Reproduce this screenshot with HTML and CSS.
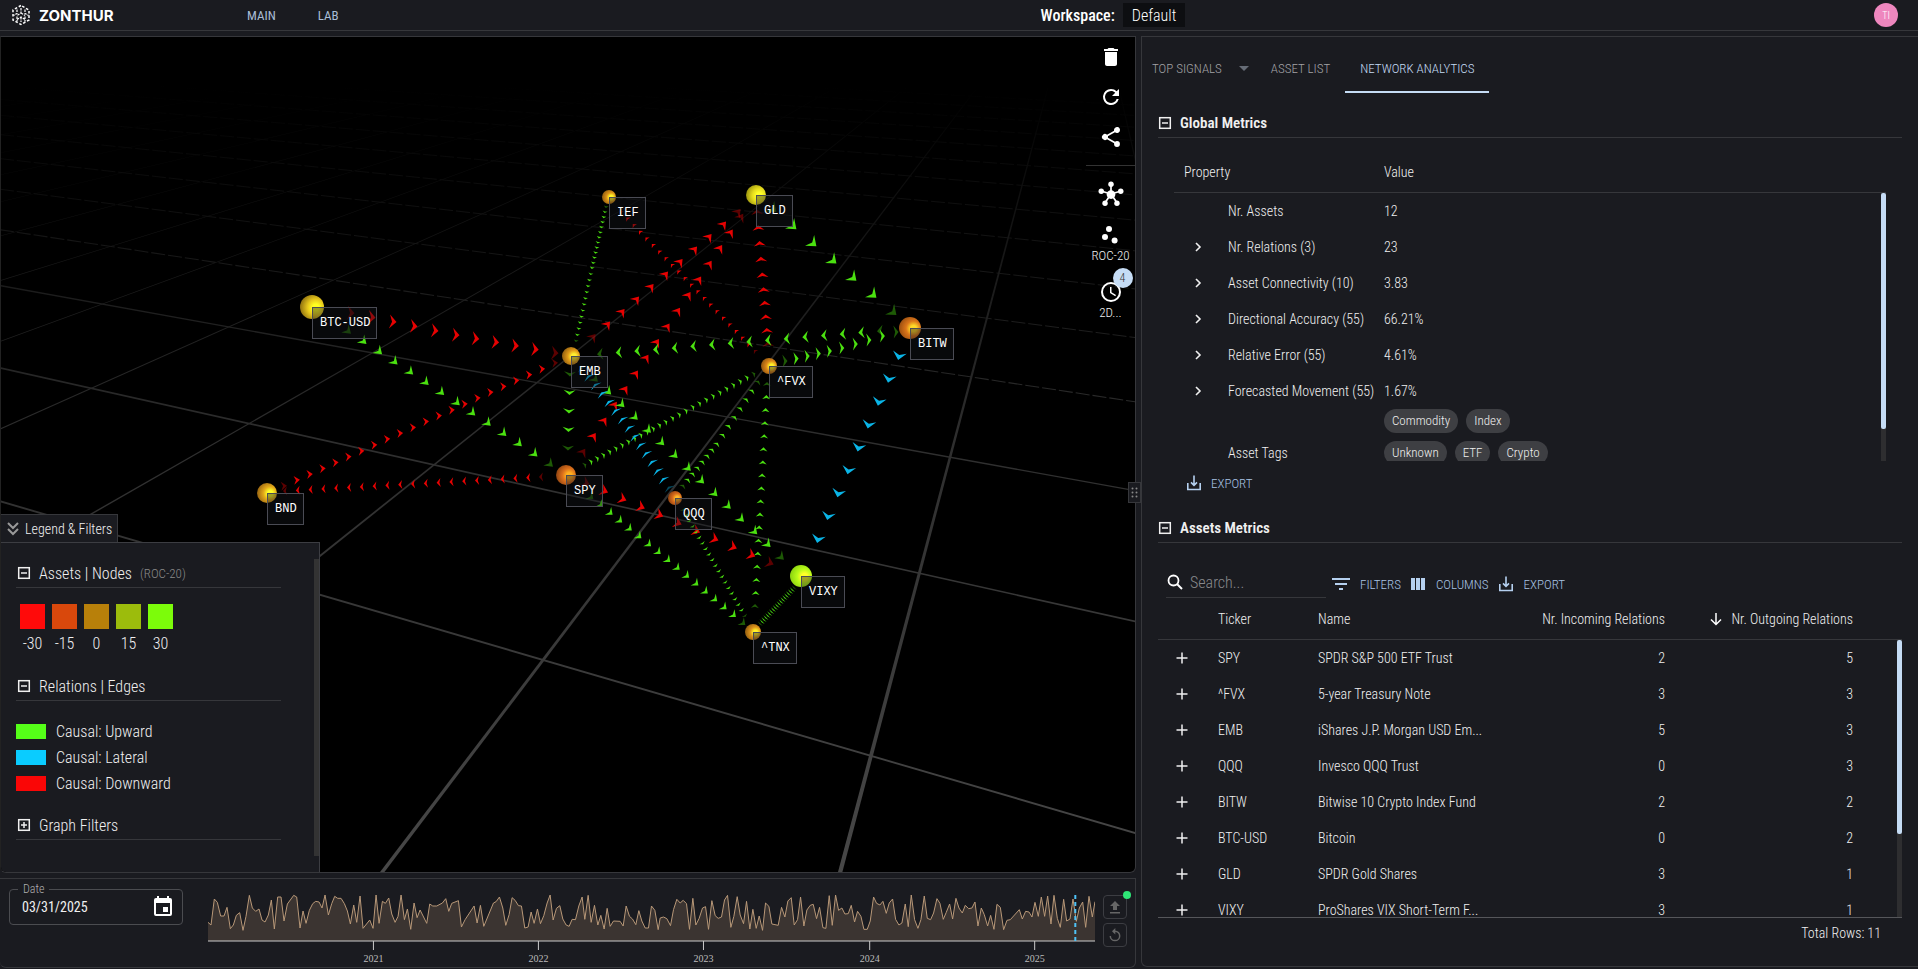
FILE: index.html
```html
<!DOCTYPE html>
<html lang="en">
<head>
<meta charset="utf-8">
<title>Zonthur</title>
<link rel="stylesheet" href="styles.css">
</head>
<body>
<svg class="defs" width="0" height="0" aria-hidden="true">
  <symbol id="i-minus" viewBox="0 0 14 14"><rect x="1.7" y="1.7" width="10.6" height="10.6" fill="none" stroke="currentColor" stroke-width="1.5"/><path d="M4 7h6" stroke="currentColor" stroke-width="1.5"/></symbol>
  <symbol id="i-plus" viewBox="0 0 14 14"><rect x="1.7" y="1.7" width="10.6" height="10.6" fill="none" stroke="currentColor" stroke-width="1.5"/><path d="M4 7h6M7 4v6" stroke="currentColor" stroke-width="1.5"/></symbol>
  <symbol id="i-export" viewBox="0 0 16 16"><path d="M1.8 8v6.5h12.4V8" fill="none" stroke="currentColor" stroke-width="1.6"/><path d="M8 .5v10M5 7.4 8 10.4l3-3" fill="none" stroke="currentColor" stroke-width="1.6"/></symbol>
  <symbol id="i-chev" viewBox="0 0 12 12"><path d="M4 2l4 4-4 4" fill="none" stroke="currentColor" stroke-width="1.6"/></symbol>
  <symbol id="i-add" viewBox="0 0 12 12"><path d="M6 .5v11M.5 6h11" stroke="currentColor" stroke-width="1.5"/></symbol>
</svg>

<header class="topbar">
  <div class="brand">
    <svg width="22" height="22" viewBox="0 0 22 22" fill="none" stroke="#fff">
      <path d="M11 1.5 3 6v10l8 4.5 8-4.5V6z" stroke-width="1.5" stroke-dasharray="2.6 1.8"/>
      <path d="M11 4v5l-4 2.5M11 9l4 2.5M7 5.5v4L3.5 11.5M15 5.5v4l3.5 2M7 12.5v5M15 12.5v5M11 13v5M7 15.5l4-2.5 4 2.5" stroke-width="1.2" stroke-dasharray="2.4 1"/>
    </svg>
    <strong>ZONTHUR</strong>
  </div>
  <nav class="mainnav"><a href="#main">MAIN</a><a href="#lab">LAB</a></nav>
  <div class="workspace"><b>Workspace:</b><button type="button">Default</button></div>
  <button class="avatar" type="button">TI</button>
</header>

<main class="layout">
  <div class="left">
    <section class="graph">
      <svg class="scene" viewBox="1 37 1134 835" preserveAspectRatio="xMidYMid slice" id="scene"></svg>

      <div class="tools">
        <button type="button" aria-label="Delete"><svg width="24" height="24" viewBox="0 0 24 24"><path d="M6 19c0 1.1.9 2 2 2h8c1.1 0 2-.9 2-2V7H6v12zM19 4h-3.500l-1-1h-5l-1 1H5v2h14V4z"/></svg></button>
        <button type="button" aria-label="Refresh"><svg width="24" height="24" viewBox="0 0 24 24"><path d="M17.650 6.350A7.958 7.958 0 0 0 12 4a8 8 0 1 0 7.730 10h-2.080A6 6 0 1 1 12 6c1.660 0 3.140.69 4.220 1.780L13 11h7V4l-2.350 2.350z"/></svg></button>
        <button type="button" aria-label="Share"><svg width="24" height="24" viewBox="0 0 24 24"><path d="M18 16.080c-.76 0-1.440.3-1.960.77L8.910 12.700c.05-.23.09-.46.09-.7s-.04-.47-.09-.7l7.050-4.110A3 3 0 1 0 15 5c0 .24.040.47.090.7L8.040 9.810a3 3 0 1 0 0 4.380l7.120 4.160c-.05.21-.08.43-.08.650a2.920 2.920 0 1 0 2.920-2.920z"/></svg></button>
        <hr>
        <button type="button" aria-label="Hub" class="hub"><svg width="26" height="28" viewBox="0 0 24 24"><path d="M12 12V4M12 12 3.500 9.500M12 12l8.500-2.500M12 12l-5.500 8M12 12l5.500 8" stroke="#fff" stroke-width="1.600"/><circle cx="12" cy="12.500" r="4"/><circle cx="12" cy="3" r="2.500"/><circle cx="3" cy="9.500" r="2.500"/><circle cx="21" cy="9.500" r="2.500"/><circle cx="6.500" cy="20.500" r="2.500"/><circle cx="17.500" cy="20.500" r="2.500"/></svg></button>
        <button type="button" class="labelled"><svg width="24" height="24" viewBox="0 0 24 24"><circle cx="7" cy="14" r="3"/><circle cx="11" cy="6" r="3"/><circle cx="16.600" cy="17.600" r="3"/></svg><span>ROC-20</span></button>
        <button type="button" class="labelled clock"><i class="badge">4</i><svg width="24" height="24" viewBox="0 0 24 24"><path d="M12 2a10 10 0 1 0 0 20 10 10 0 0 0 0-20zm0 18a8 8 0 1 1 0-16 8 8 0 0 1 0 16zm.5-13H11v6l5.250 3.150.75-1.230-4.500-2.670z"/></svg><span>2D...</span></button>
      </div>

      <div class="legend-wrap">
        <button class="legend-tab" type="button"><svg width="14" height="16" viewBox="0 0 14 16"><path d="M2 2l5 5 5-5M2 8l5 5 5-5" fill="none" stroke="#999" stroke-width="2"/></svg>Legend &amp; Filters</button>
        <div class="legend">
          <h3><svg width="14" height="14"><use href="#i-minus"/></svg>Assets | Nodes <small>(ROC-20)</small></h3>
          <ul class="scale">
            <li><i class="s1"></i>-30</li><li><i class="s2"></i>-15</li><li><i class="s3"></i>0</li><li><i class="s4"></i>15</li><li><i class="s5"></i>30</li>
          </ul>
          <h3><svg width="14" height="14"><use href="#i-minus"/></svg>Relations | Edges</h3>
          <ul class="edges">
            <li><i class="up"></i>Causal: Upward</li><li><i class="lat"></i>Causal: Lateral</li><li><i class="down"></i>Causal: Downward</li>
          </ul>
          <h3><svg width="14" height="14"><use href="#i-plus"/></svg>Graph Filters</h3>
          <span class="track"></span>
        </div>
      </div>
    </section>

    <section class="timeline">
      <div class="date">
        <label for="date">Date</label>
        <input id="date" type="text" value="03/31/2025">
        <button type="button" aria-label="Open calendar"><svg width="24" height="24" viewBox="0 0 24 24"><path d="M17 12h-5v5h5v-5zM16 1v2H8V1H6v2H5a2 2 0 0 0-2 2v14a2 2 0 0 0 2 2h14a2 2 0 0 0 2-2V5a2 2 0 0 0-2-2h-1V1h-2zm3 18H5V8h14v11z" fill="#fff"/></svg></button>
      </div>
      <div class="chart">
        <svg class="plot" viewBox="24 100 2660 144" preserveAspectRatio="none"><path id="area" fill="#3b3431"/><path id="line" fill="none" stroke="#b89878" stroke-width="1" vector-effect="non-scaling-stroke"/></svg>
        <svg class="axis">
          <line x1="0" x2="100%" y1="48" y2="48" stroke="#ccc"/>
          <g stroke="#ccc"><line x1="18.65%" x2="18.65%" y1="48" y2="57"/><line x1="37.25%" x2="37.25%" y1="48" y2="57"/><line x1="55.86%" x2="55.86%" y1="48" y2="57"/><line x1="74.6%" x2="74.6%" y1="48" y2="57"/><line x1="93.2%" x2="93.2%" y1="48" y2="57"/></g>
          <line x1="97.78%" x2="97.78%" y1="2" y2="48" stroke="#4fc3f7" stroke-width="2" stroke-dasharray="4 3"/>
          <g class="years"><text x="18.65%" y="69">2021</text><text x="37.25%" y="69">2022</text><text x="55.86%" y="69">2023</text><text x="74.6%" y="69">2024</text><text x="93.2%" y="69">2025</text></g>
        </svg>
      </div>
      <div class="mini">
        <button type="button" aria-label="Upload"><i class="dot"></i><svg width="14" height="14" viewBox="0 0 14 14"><path d="M7 1 2 6h3v4h4V6h3zM2 12h10v1.500H2z" fill="#666"/></svg></button>
        <button type="button" aria-label="Reset"><svg width="14" height="14" viewBox="0 0 14 14"><path d="M7 3.200a4.700 4.700 0 1 1-4.700 4.700" fill="none" stroke="#666" stroke-width="1.500"/><path d="M7.300 0v6.400L4 3.200z" fill="#666"/></svg></button>
      </div>
    </section>
    <span class="grip"><svg width="7" height="11" viewBox="0 0 7 11" fill="#888"><circle cx="1.500" cy="1.500" r="1"/><circle cx="5.500" cy="1.500" r="1"/><circle cx="1.500" cy="5.500" r="1"/><circle cx="5.500" cy="5.500" r="1"/><circle cx="1.500" cy="9.500" r="1"/><circle cx="5.500" cy="9.500" r="1"/></svg></span>
  </div>

  <section class="right">
    <div class="tabs" role="tablist">
      <button type="button" role="tab" class="first">TOP SIGNALS<i class="caret"></i></button>
      <button type="button" role="tab">ASSET LIST</button>
      <button type="button" role="tab" class="active" aria-selected="true">NETWORK ANALYTICS</button>
    </div>

    <h2><svg width="14" height="14"><use href="#i-minus"/></svg>Global Metrics</h2>
    <div class="box global">
      <table>
        <colgroup><col class="g1"><col class="g2"><col></colgroup>
        <thead><tr><th colspan="2">Property</th><th>Value</th></tr></thead>
        <tbody>
          <tr><td></td><td>Nr. Assets</td><td>12</td></tr>
          <tr><td><svg width="12" height="12"><use href="#i-chev"/></svg></td><td>Nr. Relations (3)</td><td>23</td></tr>
          <tr><td><svg width="12" height="12"><use href="#i-chev"/></svg></td><td>Asset Connectivity (10)</td><td>3.83</td></tr>
          <tr><td><svg width="12" height="12"><use href="#i-chev"/></svg></td><td>Directional Accuracy (55)</td><td>66.21%</td></tr>
          <tr><td><svg width="12" height="12"><use href="#i-chev"/></svg></td><td>Relative Error (55)</td><td>4.61%</td></tr>
          <tr><td><svg width="12" height="12"><use href="#i-chev"/></svg></td><td>Forecasted Movement (55)</td><td>1.67%</td></tr>
          <tr class="tags"><td></td><td>Asset Tags</td><td><div class="chips"><span>Commodity</span><span>Index</span><span>Unknown</span><span>ETF</span><span>Crypto</span></div></td></tr>
        </tbody>
      </table>
      <span class="bar"><i></i></span>
    </div>
    <button type="button" class="link solo"><svg width="16" height="16"><use href="#i-export"/></svg>EXPORT</button>

    <h2><svg width="14" height="14"><use href="#i-minus"/></svg>Assets Metrics</h2>
    <div class="toolbar">
      <label class="search"><svg width="18" height="18" viewBox="0 0 18 18"><circle cx="7.500" cy="7.500" r="5" fill="none" stroke="#fff" stroke-width="1.800"/><path d="M11 11l5 5" stroke="#fff" stroke-width="2"/></svg><input type="text" placeholder="Search..." aria-label="Search"></label>
      <button type="button" class="link"><svg width="18" height="14" viewBox="0 0 18 14"><path d="M0 1h18v2H0zM3 6h12v2H3zM7 11h4v2H7z" fill="currentColor"/></svg>FILTERS</button>
      <button type="button" class="link cols"><svg width="16" height="14" viewBox="0 0 16 14"><path d="M1 1h4v12H1zM6 1h4v12H6zM11 1h4v12h-4z" fill="currentColor"/></svg>COLUMNS</button>
      <button type="button" class="link"><svg width="16" height="16"><use href="#i-export"/></svg>EXPORT</button>
    </div>
    <div class="box assets">
      <table>
        <colgroup><col class="a1"><col class="a2"><col class="a3"><col><col class="a5"></colgroup>
        <thead><tr><th></th><th>Ticker</th><th>Name</th><th class="n">Nr. Incoming Relations</th><th class="n last"><svg width="14" height="14" viewBox="0 0 14 14"><path d="M7 1v11M2 7.500l5 5 5-5" fill="none" stroke="#fff" stroke-width="1.500"/></svg>Nr. Outgoing Relations</th></tr></thead>
        <tbody>
          <tr><td><svg width="12" height="12"><use href="#i-add"/></svg></td><td>SPY</td><td>SPDR S&amp;P 500 ETF Trust</td><td class="n">2</td><td class="n last">5</td></tr>
          <tr><td><svg width="12" height="12"><use href="#i-add"/></svg></td><td>^FVX</td><td>5-year Treasury Note</td><td class="n">3</td><td class="n last">3</td></tr>
          <tr><td><svg width="12" height="12"><use href="#i-add"/></svg></td><td>EMB</td><td>iShares J.P. Morgan USD Em...</td><td class="n">5</td><td class="n last">3</td></tr>
          <tr><td><svg width="12" height="12"><use href="#i-add"/></svg></td><td>QQQ</td><td>Invesco QQQ Trust</td><td class="n">0</td><td class="n last">3</td></tr>
          <tr><td><svg width="12" height="12"><use href="#i-add"/></svg></td><td>BITW</td><td>Bitwise 10 Crypto Index Fund</td><td class="n">2</td><td class="n last">2</td></tr>
          <tr><td><svg width="12" height="12"><use href="#i-add"/></svg></td><td>BTC-USD</td><td>Bitcoin</td><td class="n">0</td><td class="n last">2</td></tr>
          <tr><td><svg width="12" height="12"><use href="#i-add"/></svg></td><td>GLD</td><td>SPDR Gold Shares</td><td class="n">3</td><td class="n last">1</td></tr>
          <tr><td><svg width="12" height="12"><use href="#i-add"/></svg></td><td>VIXY</td><td>ProShares VIX Short-Term F...</td><td class="n">3</td><td class="n last">1</td></tr>
        </tbody>
      </table>
      <span class="bar"><i></i></span>
    </div>
    <p class="total">Total Rows: 11</p>
  </section>
</main>
<script src="scene.js"></script>
</body>
</html>
```
FILE: styles.css
```css
* { box-sizing: border-box; }
body {
  margin: 0;
  height: 100vh;
  display: flex;
  flex-direction: column;
  overflow: hidden;
  background: #1a1b20;
  color: #f0f0f0;
  font-family: "Roboto Condensed", "Liberation Sans", sans-serif;
  font-size: 14px;
  font-weight: 300;
}
button, input { font: inherit; color: inherit; background: none; border: 0; padding: 0; margin: 0; }
svg { display: block; flex: none; }
ul, h2, h3, p { margin: 0; padding: 0; }
ul { list-style: none; }
.defs { position: absolute; }

.topbar {
  flex: none;
  height: 31px;
  display: grid;
  grid-template-columns: 247px minmax(0, 795fr) auto minmax(0, 734fr);
  align-items: center;
  border-bottom: 1px solid #36373b;
}
.brand { display: flex; align-items: center; gap: 7px; padding-left: 10px; }
.brand strong { font: 700 15px "Inter", sans-serif; color: #fff; }
.mainnav { display: flex; gap: 42px; }
.mainnav a { color: #a9bdd6; text-decoration: none; font-size: 13px; font-weight: 400; }
.workspace { display: flex; align-items: center; gap: 8px; font-size: 16px; color: #fff; }
.workspace b { font-weight: 500; }
.workspace button { height: 24px; padding: 0 9px; background: #0d0e11; }
.avatar {
  justify-self: end;
  margin-right: 20px;
  width: 24px;
  height: 24px;
  border-radius: 50%;
  background: #ee87be;
  color: #fff;
  font-size: 10px;
}

.layout {
  flex: 1;
  min-height: 0;
  display: grid;
  grid-template-columns: minmax(0, 1136fr) minmax(0, 777fr);
  gap: 5px;
  padding-top: 5px;
}
.left { position: relative; display: flex; flex-direction: column; gap: 5px; min-height: 0; padding-bottom: 1px; }
.graph {
  position: relative;
  flex: 1;
  min-height: 0;
  background: #000;
  border: 1px solid #36373b;
  border-left-color: #222;
  border-radius: 0 0 6px 6px;
  overflow: hidden;
}
.scene { width: 100%; height: 100%; }
.scene text { font: 12px "Liberation Mono", monospace; fill: #fff; }

.tools {
  position: absolute;
  top: 0;
  right: 0;
  width: 49px;
  padding-top: 8px;
  display: flex;
  flex-direction: column;
  align-items: center;
  gap: 16px;
}
.tools svg { fill: #fff; }
.tools hr { width: 100%; margin: 0; border: 0; border-top: 1px solid #333; }
.tools hr + .hub { margin-top: -2px; }
.labelled { position: relative; display: flex; flex-direction: column; align-items: center; margin-top: -1px; font-size: 13px; line-height: 18px; }
.badge {
  position: absolute;
  left: 14px;
  top: -12px;
  width: 20px;
  height: 20px;
  line-height: 20px;
  border-radius: 50%;
  background: #c5dcf5;
  color: #333;
  font-style: normal;
  font-size: 12px;
  text-align: center;
}

.legend-wrap { position: absolute; left: 0; bottom: 0; width: 319px; }
.legend-tab {
  height: 28px;
  padding: 0 5px;
  display: flex;
  align-items: center;
  gap: 5px;
  background: #1a1b20;
  border: 1px solid #36373b;
  border-bottom: 0;
  border-left: 0;
}
.legend { position: relative; height: 330px; padding: 16px 38px 0 15px; background: #1a1b20; border: 1px solid #3c3d42; border-left: 0; border-bottom: 0; font-size: 16px; }
.legend h3 {
  display: flex;
  align-items: center;
  gap: 8px;
  height: 29px;
  font-size: 16px;
  font-weight: 300;
  border-bottom: 1px solid #36373b;
  padding-left: 1px;
}
.legend h3 small { font-size: 13px; color: #8a8a8a; }
.scale { display: flex; gap: 7px; padding: 16px 0 26px 4px; }
.scale li { display: flex; flex-direction: column; align-items: center; gap: 5px; width: 25px; height: 42px; line-height: 20px; }
.scale i { flex: none; width: 25px; height: 25px; }
.s1 { background: #ff0a0a; } .s2 { background: #d9480c; } .s3 { background: #b8800a; } .s4 { background: #9cbc0c; } .s5 { background: #7cfc0a; }
.edges { padding: 17px 0 15px; }
.edges li { display: flex; align-items: center; gap: 10px; height: 26px; }
.edges i { width: 30px; height: 15px; }
.up { background: #55ff18; } .lat { background: #0accff; } .down { background: #fa0606; }
.track { position: absolute; right: 0; top: 16px; bottom: 16px; width: 5px; background: #333; }

.timeline { flex: none; display: flex; height: 90px; border: 1px solid #36373b; border-left: 0; border-radius: 0 0 6px 6px; }
.date { position: relative; width: 174px; height: 36px; margin: 10px 25px 0 9px; display: flex; align-items: center; padding: 0 14px 0 12px; border: 1px solid #4b4c50; border-radius: 4px; }
.date label { position: absolute; left: 8px; top: -9px; padding: 0 5px; background: #1a1b20; color: #b0b0b0; font-size: 12px; line-height: 16px; }
.date input { flex: 1; min-width: 0; font-weight: 400; }
.date button { margin-right: -7px; }
.chart { position: relative; flex: 1; min-width: 0; margin-top: 14px; }
.plot { width: 100%; height: 48px; }
.axis { position: absolute; left: 0; top: 0; width: 100%; height: 74px; overflow: visible; }
.years text { font: 10px "Liberation Serif", serif; fill: #bbb; text-anchor: middle; }
.mini { display: flex; flex-direction: column; gap: 4px; margin: 16px 8px 0; }
.mini button { position: relative; width: 24px; height: 24px; border: 1px solid #3c3d42; border-radius: 4px; display: grid; place-items: center; }
.dot { position: absolute; right: -5px; top: -5px; width: 8px; height: 8px; border-radius: 50%; background: #2ee676; }
.grip { position: absolute; right: -5px; top: 446px; width: 13px; height: 21px; display: grid; place-items: center; background: #1a1b20; border: 1px solid #36373b; }

.right {
  display: flex;
  flex-direction: column;
  min-height: 0;
  padding: 8px 16px 12px 16px;
  border: 1px solid #36373b;
  border-right: 0;
  border-radius: 0 0 0 6px;
  margin-bottom: 2px;
}
.tabs { flex: none; display: flex; height: 48px; margin-left: -6px; }
.tabs button { display: flex; align-items: center; padding: 0 15px; color: #a3a3a6; font-size: 13px; border-bottom: 2px solid transparent; }
.tabs .first { padding-left: 0; padding-right: 7px; gap: 17px; }
.tabs .active { color: #c5dcf5; border-color: #c5dcf5; }
.caret { border: 5px solid transparent; border-top-color: #666c76; border-bottom: 0; }
.right h2 {
  flex: none;
  height: 29px;
  display: flex;
  align-items: center;
  gap: 8px;
  margin-top: 16px;
  border-bottom: 1px solid #36373b;
  font-size: 15px;
  font-weight: 600;
}
.box { position: relative; overflow: hidden; }
.box table { width: 100%; table-layout: fixed; border-collapse: separate; border-spacing: 0; }
.box th { height: 41px; padding: 0; text-align: left; font-weight: 300; border-bottom: 1px solid #36373b; }
.box td { height: 36px; padding: 0; white-space: nowrap; }
.global { flex: none; height: 309px; margin: 14px 16px 0; }
.global th:first-child { padding-left: 10px; }
.global td svg { margin-left: 18px; }
.g1 { width: 54px; } .g2 { width: 156px; }
.global .tags td { height: 88px; }
.global .tags td:last-child { vertical-align: top; }
.chips { display: flex; flex-wrap: wrap; gap: 8px; width: 180px; font-size: 13px; }
.chips span { height: 24px; line-height: 24px; padding: 0 8px; border-radius: 12px; background: #3e3f43; }
.bar { position: absolute; right: 0; top: 41px; bottom: 0; width: 5px; background: #2e2e30; }
.bar i { display: block; height: 88%; border-radius: 2px; background: #c5dcf5; }
.assets .bar i { height: 70%; }
.link { display: flex; align-items: center; gap: 9px; height: 30px; color: #a9c4e4; font-size: 13px; }
.link svg { color: #b5d0ef; }
.solo { align-self: flex-start; flex: none; margin: 7px 0 0 28px; }
.toolbar { flex: none; display: flex; gap: 9px; height: 32px; margin-top: 24px; }
.toolbar .link { height: 34px; gap: 10px; }
.search { display: flex; align-items: center; gap: 6px; width: 160px; margin: 0 -3px 0 8px; height: 31px; border-bottom: 1px solid #36373b; }
.search input { flex: 1; min-width: 0; font-size: 16px; outline: 0; }
.search input::placeholder { color: #88898c; opacity: 1; }
.assets { flex: 1; min-height: 0; border-bottom: 1px solid #55565a; }
.a1 { width: 60px; } .a2 { width: 100px; } .a3 { width: 159px; } .a5 { width: 237px; }
.assets td svg { margin-left: 18px; }
.box .n { text-align: right; }
.box .last { padding-right: 49px; }
.last svg { display: inline-block; vertical-align: -2px; margin-right: 8px; }
.total { flex: none; height: 36px; padding: 5px 21px 0; text-align: right; line-height: 20px; }
```
FILE: scene.js
```js
const NS = 'http://www.w3.org/2000/svg';
const scene = document.getElementById('scene');
function add(tag, attrs, parent = scene) {
  const el = document.createElementNS(NS, tag);
  for (const k in attrs) el.setAttribute(k, attrs[k]);
  parent.appendChild(el);
  return el;
}

/* Floor grid: two families of lines, each meeting at its own vanishing point. */
const defs = add('defs', {});
const fog = add('linearGradient', { id: 'fog', gradientUnits: 'userSpaceOnUse', x1: 0, y1: 85, x2: 0, y2: 872 }, defs);
[[0, '#000'], [0.12, '#0d0d0d'], [0.25, '#1b1b1b'], [0.45, '#2e2e2e'], [0.7, '#393939'], [1, '#484848']]
  .forEach(([o, c]) => add('stop', { offset: o, 'stop-color': c }, fog));
for (let k = -1; k < 16; k++) {
  const x280 = 997 - 165.8 * k;
  const at = y => 1086 + (x280 - 1086) * (y + 56) / 336;
  const w = 2.2;
  add('path', { fill: 'url(#fog)', d: `M${at(86) - 0.5} 86L${at(86) + 0.5} 86L${at(872) + w} 872L${at(872) - w} 872Z` });
}
for (let k = -1; k < 14; k++) {
  const d = 1 / (0.002083 + 0.000492 * k);
  const y = x => -63 + d * (x + 1930) / 2150;
  const w = Math.max(0.9, 1.6 - k * 0.25);
  const line = { fill: 'none', stroke: 'url(#fog)', 'stroke-width': w, d: `M0 ${y(0)}L1136 ${y(1136)}` };
  if (k > 1) line['stroke-dasharray'] = '14 3';
  add('path', line);
}

/* Edges: [colour, half width, length, first, last, arrow count, reversed, middle point, fixed angle] */
const G = '#4be010', R = '#e60202', C = '#0ab4e6';
const edges = [
  [R, 7, 3.5, [351, 313], [555, 353], 11, 0, [456, 335], 5],
  [G, 5.5, 4, [348, 331], [550, 464], 14, 0, null, 42],
  [R, 4.5, 3, [284, 486], [555, 363], 22, 0, null, -5],
  [R, 4.5, 2, [285, 491], [541, 477], 21, 1],
  [G, 2.5, 1, [606, 207], [576, 341], 25, 0, [592, 268]],
  [R, 5.5, 4, [593, 337], [738, 212], 11, 0, null, -50],
  [R, 5.5, 4, [583, 452], [741, 217], 16, 0],
  [R, 3, 1.5, [621, 212], [755, 351], 22, 1],
  [R, 6, 2.5, [768, 344], [757, 212], 10, 0, [763, 283]],
  [G, 7, 4.5, [773, 209], [893, 312], 7, 0],
  [G, 6, 3, [880, 331], [600, 354], 16, 0],
  [G, 6.5, 2.5, [785, 361], [896, 332], 10, 0, [835, 350], -2],
  [G, 3.5, 1.5, [585, 465], [754, 374], 27, 0, [666, 422]],
  [G, 4, 1.5, [683, 486], [758, 382], 15, 0, [717, 444]],
  [G, 4, 2, [767, 384], [755, 606], 18, 1],
  [C, 7, 4, [899, 356], [818, 539], 9, 0, null, 103],
  [G, 5.5, 4, [595, 379], [781, 557], 15, 0],
  [C, 6.5, 1.5, [582, 368], [669, 488], 15, 1, [629, 428]],
  [G, 6, 2.5, [570, 374], [568, 448], 5, 0],
  [R, 6, 4, [586, 483], [770, 563], 11, 0],
  [G, 5, 3, [591, 497], [743, 623], 17, 0, [668, 560]],
  [G, 3, 1, [683, 510], [745, 616], 20, 0],
  [G, 3.5, 0.4, [794, 588], [760, 624], 19, 0]
];
for (const [color, hw, len, a, b, n, reversed, mid, angle] of edges) {
  const m = mid || [(a[0] + b[0]) / 2, (a[1] + b[1]) / 2];
  let deg = Math.atan2(b[1] - a[1], b[0] - a[0]) * 180 / Math.PI;
  if (reversed) deg += 180;
  if (angle !== undefined) deg = angle;
  for (let i = 0; i < n; i++) {
    const t = i / (n - 1);
    const p = j => t < 0.5 ? a[j] + (m[j] - a[j]) * t * 2 : m[j] + (b[j] - m[j]) * (t * 2 - 1);
    const faded = (i === 0 || i === n - 1) && angle !== 103;
    add('path', {
      fill: color,
      opacity: faded ? 0.4 : 1,
      transform: `translate(${p(0).toFixed(1)} ${p(1).toFixed(1)}) rotate(${deg.toFixed(1)})`,
      d: `M${len} 0L${-len} ${hw}L${-len * 0.1 - 0.6} 0L${-len} ${-hw}Z`
    });
  }
}

/* Assets: name, x, y, radius, highlight, body, rim */
const nodes = [
  ['BTC-USD', 312, 307, 12, '#ffff20', '#e8c81c', '#8a6c10'],
  ['EMB', 571, 356, 9, '#fff030', '#e09a18', '#8c5a10'],
  ['SPY', 566, 475, 10, '#ffb020', '#dc701c', '#8a4010'],
  ['BND', 267, 493, 10, '#ffff28', '#e2a81a', '#946010'],
  ['QQQ', 675, 498, 7, '#ffb828', '#d86c1c', '#8a4010'],
  ['IEF', 609, 197, 7, '#fff428', '#dc9218', '#8c5a10'],
  ['GLD', 756, 195, 10, '#ffff28', '#e6dc1e', '#96900e'],
  ['BITW', 910, 328, 11, '#ffd828', '#dc761a', '#964c10'],
  ['^FVX', 769, 366, 8, '#fff028', '#dc861a', '#8c5410'],
  ['VIXY', 801, 576, 11, '#ffff28', '#b8fa18', '#88d010'],
  ['^TNX', 753, 632, 8, '#fff028', '#dc921a', '#8c5a10']
];
nodes.forEach(([name, x, y, r, hi, body, rim], i) => {
  const g = add('radialGradient', { id: 'n' + i, cx: '66%', cy: '52%', r: '68%' }, defs);
  [[0, hi], [0.2, hi], [0.5, body], [1, rim]].forEach(([o, c]) => add('stop', { offset: o, 'stop-color': c }, g));
  add('circle', { cx: x, cy: y, r, fill: `url(#n${i})` });
});
nodes.forEach(([name, x, y]) => {
  const w = name.length * 7 + 15;
  add('rect', { x: x + 0.5, y: y + 0.5, width: w, height: 31, fill: '#14171c', 'fill-opacity': 0.4, stroke: '#4a4b54' });
  add('text', { x: x + 8, y: y + 19 }).textContent = name;
});

/* Timeline values */
const first = '24,188 33,196 43,118 52,128 62,169 72,169 81,143 91,207 100,196 109,167 119,159 129,212 138,170 148,107 157,145 167,155 177,148 186,181 195,187 205,166 214,121 223,208 233,112 243,112 252,184 262,133 281,107 290,112 300,205 309,154 318,191 328,152 338,132 347,125 357,127 366,145 375,106 385,166 395,132 404,110 413,116 423,116 433,132 442,154 451,193 461,136 470,188 480,109 489,206 509,181 519,206 528,106 537,191 547,125 556,131 566,115 575,163 585,188 594,170 603,106 613,180 622,148 632,209 642,130 651,174 660,151 680,191 689,133 698,139 710,139 727,130 737,117 746,155 755,131 775,123 784,202 795,180 822,139 831,190 841,137 851,200 880,130 888,126 898,112 908,145 917,197 927,165 936,114 945,122 955,138 964,139 974,205 984,202 993,157 1002,191 1012,148 1021,192 1031,168 1041,130 1050,106 1059,181 1069,146 1079,138 1088,178 1098,196 1107,200 1116,179 1126,180 1136,139 1146,112 1154,179 1164,107 1173,188 1183,137 1193,196 1202,167 1212,208 1221,146 1230,200 1240,184 1260,185 1269,199 1278,139 1288,170 1297,178 1307,195 1316,153 1325,184 1335,205 1345,205 1354,139 1364,152 1374,210';
const second = '0,175 10,172 20,177 31,198 40,150 50,119 60,130 69,122 79,132 88,209 98,116 107,196 117,176 127,145 136,141 145,209 155,123 165,168 174,176 184,172 193,121 202,107 212,203 221,170 231,111 240,166 250,192 259,125 269,208 278,149 288,206 297,169 307,212 316,130 326,140 335,193 354,197 364,143 374,172 383,124 393,114 402,196 412,180 421,112 431,199 440,151 450,137 459,134 469,177 478,143 488,204 497,206 507,108 516,197 526,106 535,152 545,145 554,163 564,162 573,137 583,187 592,155 602,170 611,209 621,209 630,184 640,112 649,131 659,136 668,125 678,161 687,130 697,118 706,179 716,196 725,190 735,133 744,201 753,106 763,180 773,206 782,180 792,109 801,176 811,180 820,160 830,117 839,131 849,179 858,158 868,133 877,178 887,116 896,145 906,160 915,137 925,147 935,145 944,127 953,199 963,145 972,165 982,199 991,167 1001,209 1010,134 1020,143 1030,210 1040,182 1050,180 1077,150 1086,178 1096,155 1106,157 1115,172 1124,128 1134,170 1143,112 1153,170 1162,109 1172,193 1181,107 1191,176 1200,203 1210,119 1219,184 1229,178 1238,118 1248,185 1257,145 1267,127 1276,203 1286,110 1296,172 1304,126';
const parse = (s, dx) => s.split(' ').map(p => p.split(',').map(Number)).map(([x, y]) => `${x + dx} ${y}`);
const line = 'M' + parse(first, 0).concat(parse(second, 1380)).join('L');
document.getElementById('line').setAttribute('d', line);
document.getElementById('area').setAttribute('d', line + 'V244H24Z');
```
